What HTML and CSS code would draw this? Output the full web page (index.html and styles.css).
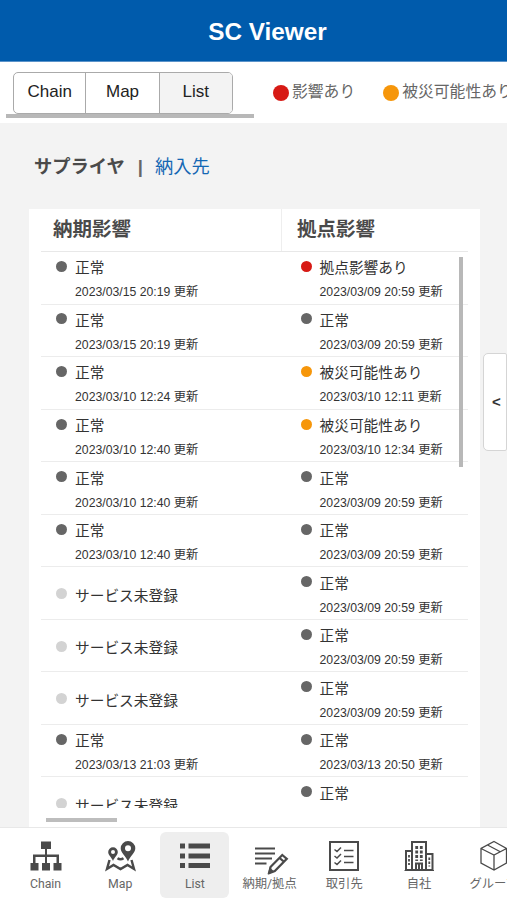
FILE: index.html
```html
<!DOCTYPE html>
<html lang="ja">
<head>
    <meta charset="UTF-8">
    <title>SC Viewer</title>
    <link rel="stylesheet" href="styles.css">
</head>
<body>

<header class="header">SC Viewer</header>

<div class="toolbar">
    <div class="tabs-wrap">
        <div class="tabs">
            <div class="tab">Chain</div>
            <div class="tab">Map</div>
            <div class="tab on">List</div>
        </div>
        <div class="tabs-bar"></div>
    </div>
    <div class="legend"><i class="red"></i><span>影響あり</span></div>
    <div class="legend"><i class="orange"></i><span>被災可能性あり</span></div>
</div>

<main class="main">
    <div class="switch"><b>サプライヤ</b><span class="sep">|</span><a>納入先</a></div>

    <div class="card">
        <div class="thead">
            <div>納期影響</div>
            <div>拠点影響</div>
        </div>
        <div class="tbody" id="tbody"></div>
        <div class="scroll-y"></div>
        <div class="scroll-x"></div>
    </div>
    <div class="drawer">&lt;</div>
</main>

<nav class="nav">
    <div class="item">
        <svg width="32" height="32" viewBox="0 0 32 32" fill="#4a4a4a">
            <path d="M11.500 1.500h10v7.500h-4v5.500h12V23h2.500v7.500h-8V23h3v-6h-9.500v6h3v7.500h-8V23h3v-6H6v6h3v7.500H1V23h2.500v-8.500h12V9h-4z" transform="translate(-.5 0)"/>
        </svg>
        <span>Chain</span>
    </div>
    <div class="item">
        <svg width="32" height="32" viewBox="0 0 32 32" fill="#4a4a4a">
            <path fill-rule="evenodd" d="M24 1a7.300 7.300 0 0 1 7.300 7.300c0 5-5 7.500-7.300 13.200-2.300-5.700-7.300-8.200-7.300-13.200A7.300 7.300 0 0 1 24 1zm0 4.300a3 3 0 1 0 0 6 3 3 0 0 0 0-6z"/>
            <path fill-rule="evenodd" d="M9 7.300a4.800 4.800 0 0 1 4.800 4.800c0 3.500-3.300 5-4.800 9-1.500-4-4.800-5.500-4.800-9A4.800 4.800 0 0 1 9 7.300zm0 2.800a2 2 0 1 0 0 4 2 2 0 0 0 0-4z"/>
            <path d="M5.500 20L3 29l6.500-4 7 4 7-4 6.500 4-2.500-9M13.500 18.300q3 2 6 0" fill="none" stroke="#4a4a4a" stroke-width="2.400"/>
        </svg>
        <span>Map</span>
    </div>
    <div class="item on">
        <svg width="32" height="32" viewBox="0 0 32 32" fill="#4a4a4a">
            <path d="M1 3.500h5v5H1zM9.500 3.500H31v5H9.500zM1 13.500h5v5H1zM9.500 13.500H31v5H9.500zM1 23h5v5H1zM9.500 23H31v5H9.500z"/>
        </svg>
        <span>List</span>
    </div>
    <div class="item">
        <svg width="36" height="32" viewBox="0 0 36 32" fill="none" stroke="#4a4a4a" stroke-width="2">
            <path d="M3 8.500h20M3 13.500h20M3 18.500h17M3 23.500h11.500"/>
            <path d="M30.500 15.500l4.500 3.800L23 31.500l-5.300 2 1-6zM27.800 18.500l4.500 3.800" stroke-width="2.200" transform="translate(-.2 -.5)"/>
            <path d="M18 29l2.500 2.300-3.500 1.300z" fill="#4a4a4a"/>
        </svg>
        <span>納期/拠点</span>
    </div>
    <div class="item">
        <svg width="32" height="32" viewBox="0 0 32 32" fill="none" stroke="#4a4a4a">
            <path d="M2 2h28v28H2z" stroke-width="2"/>
            <path d="M6.500 9.500l2.500 2 4-4M6.500 16L9 18l4-4M6.500 22.500L9 24.500l4-4M16 10.500h9.500M16 16.500h9.500M16 22.500h9.500" stroke-width="1.500"/>
        </svg>
        <span>取引先</span>
    </div>
    <div class="item">
        <svg width="32" height="32" viewBox="0 0 32 32" fill="none" stroke="#4a4a4a">
            <path d="M9 30V2h14v28M9 11H3v19h26.500V14H23M13 30v-6.500h6V30M16 24v6" stroke-width="2"/>
            <path d="M13.700 6v15M18.300 6v15" stroke-width="2.800" stroke-dasharray="3 1.500"/>
            <path d="M6 15v10M26.300 17.500v9" stroke-width="1.800" stroke-dasharray="2.500 1.500"/>
            <path d="M1.500 30.500h10M20.500 30.500H31"/>
        </svg>
        <span>自社</span>
    </div>
    <div class="item">
        <svg width="32" height="32" viewBox="0 0 32 32" fill="none" stroke="#4a4a4a" stroke-width="1.300">
            <path d="M16 1.500l12.500 7v14.500L16 30 3 23V8.500zM3 8.500l13 6.500 12.500-6.500M16 15v15M9.500 5l12.800 6.800"/>
        </svg>
        <span>グループ</span>
    </div>
</nav>

<script>
    // [status, updated at] for both columns
    var rows = [
        ['正常', '2023/03/15 20:19', '拠点影響あり', '2023/03/09 20:59', 'red'],
        ['正常', '2023/03/15 20:19', '正常', '2023/03/09 20:59'],
        ['正常', '2023/03/10 12:24', '被災可能性あり', '2023/03/10 12:11', 'orange'],
        ['正常', '2023/03/10 12:40', '被災可能性あり', '2023/03/10 12:34', 'orange'],
        ['正常', '2023/03/10 12:40', '正常', '2023/03/09 20:59'],
        ['正常', '2023/03/10 12:40', '正常', '2023/03/09 20:59'],
        ['サービス未登録', '', '正常', '2023/03/09 20:59'],
        ['サービス未登録', '', '正常', '2023/03/09 20:59'],
        ['サービス未登録', '', '正常', '2023/03/09 20:59'],
        ['正常', '2023/03/13 21:03', '正常', '2023/03/13 20:50'],
        ['サービス未登録', '', '正常', '']
    ]

    function cell(name, date, color, none) {
        var html = '<div class="cell' + (none ? ' none' : '') + '"><i class="' + (color || '') + '"></i><div><p>' + name + '</p>'
        if (date) {
            html += '<small>' + date + ' 更新</small>'
        }
        return html + '</div></div>'
    }

    var str = ''
    for (var i = 0; i < rows.length; i++) {
        var r = rows[i]
        str += '<div class="row">' + cell(r[0], r[1], '', !r[1]) + cell(r[2], r[3], r[4]) + '</div>'
    }
    document.getElementById('tbody').innerHTML = str
</script>
</body>
</html>
```
FILE: styles.css
```css
*{
    margin: 0;
    padding: 0;
    box-sizing: border-box;
}
body{
    height: 900px;
    display: flex;
    flex-direction: column;
    overflow: hidden;
    background: #f3f3f3;
    color: #333;
    font-family: "Liberation Sans", "Noto Sans CJK JP", sans-serif;
}
.header{
    height: 62px;
    flex: none;
    background: #005bac;
    border-bottom: 1px solid #5b93c9;
    color: white;
    font-size: 24.3px;
    font-weight: bold;
    line-height: 63px;
    text-align: center;
    padding-left: 28px;
}
.toolbar{
    height: 61px;
    flex: none;
    display: flex;
    padding: 10px 0 0 6px;
    background: white;
    overflow: hidden;
}
.tabs-wrap{
    width: 248px;
    margin-right: 19px;
    flex: none;
}
.tabs{
    width: 220px;
    height: 42px;
    margin-left: 7px;
    display: flex;
    border: 1px solid #aaa;
    border-radius: 5px;
    overflow: hidden;
}
.tab{
    width: 72px;
    line-height: 38px;
    text-align: center;
    font-size: 17px;
    color: #222;
}
.tab + .tab{
    width: 74px;
    border-left: 1px solid #aaa;
}
.tab.on{
    background: #f3f3f3;
}
.tabs-bar{
    height: 4px;
    background: #b8b8b8;
}
.legend{
    height: 40px;
    flex: none;
    display: flex;
    align-items: center;
    margin-right: 28px;
    font-size: 15.8px;
    color: #666;
    white-space: nowrap;
}
.legend i{
    width: 16px;
    height: 16px;
    margin: 2px 3px 0 0;
    border-radius: 50%;
}
.legend span{
    padding-bottom: 3px;
}
i.red{
    background: #d71a15;
}
i.orange{
    background: #f6960a;
}
.main{
    flex: 1;
    min-height: 0;
    position: relative;
}
.switch{
    height: 86px;
    padding-left: 34px;
    line-height: 88px;
    font-size: 18.3px;
    color: #4a4a4a;
}
.sep{
    margin: 0 12px 0 13px;
    font-weight: bold;
    color: #666;
}
.switch a{
    color: #1467b3;
}
.card{
    width: 451px;
    height: 618px;
    margin-left: 29px;
    padding: 0 12px;
    background: white;
    position: relative;
}
.thead{
    height: 43px;
    display: flex;
    border-bottom: 1px solid #e8e8e8;
    font-size: 19.5px;
    font-weight: bold;
    line-height: 41px;
    color: #4a4a4a;
}
.thead div{
    width: 240px;
    padding-left: 12px;
}
.thead div + div{
    width: 187px;
    padding-left: 15px;
    border-left: 1px solid #eee;
}
.tbody{
    height: 556px;
    overflow: hidden;
}
.row{
    height: 52.55px;
    display: flex;
    border-bottom: 1px solid #ececec;
}
.cell{
    width: 244.5px;
    flex: none;
    display: flex;
    padding: 4.400px 0 0 15px;
}
.cell + .cell{
    width: 182px;
}
.cell i{
    width: 11px;
    height: 11px;
    margin: 4.500px 8px 0 0;
    border-radius: 50%;
    flex: none;
    background: #666;
}
.cell i.red{
    background: #d71a15;
}
.cell i.orange{
    background: #f6960a;
}
.cell p{
    height: 24px;
    line-height: 24px;
    font-size: 14.7px;
    white-space: nowrap;
}
.cell small{
    display: block;
    line-height: 25px;
    font-size: 12.25px;
    white-space: nowrap;
}
.cell.none{
    padding-top: 16.400px;
}
.cell.none i{
    background: #d3d3d3;
}
.scroll-y{
    width: 4px;
    height: 210px;
    position: absolute;
    top: 48px;
    right: 17px;
    background: #b8b8b8;
}
.scroll-x{
    width: 71px;
    height: 4px;
    position: absolute;
    left: 17px;
    bottom: 5px;
    background: #bdbdbd;
}
.drawer{
    width: 24px;
    height: 98px;
    position: absolute;
    right: 0;
    top: 230px;
    padding-left: 8px;
    background: white;
    border: 1px solid #d5d5d5;
    border-radius: 5px 2px 2px 5px;
    font-size: 15px;
    font-weight: bold;
    line-height: 96px;
    color: #333;
}
.nav{
    width: 530px;
    height: 73px;
    flex: none;
    display: flex;
    gap: 5.700px;
    padding: 4px 0 0 11px;
    background: white;
    border-top: 1px solid #e8e8e8;
}
.item{
    width: 69px;
    height: 66px;
    flex: none;
    display: flex;
    flex-direction: column;
    align-items: center;
    padding-top: 8px;
    border-radius: 6px;
    font-family: Roboto, "Noto Sans CJK JP", sans-serif;
    font-size: 12.3px;
    color: #666;
}
.item.on{
    background: #eee;
}
.item svg{
    overflow: visible;
    flex: none;
}
.item span{
    line-height: 25px;
    white-space: nowrap;
}
```
